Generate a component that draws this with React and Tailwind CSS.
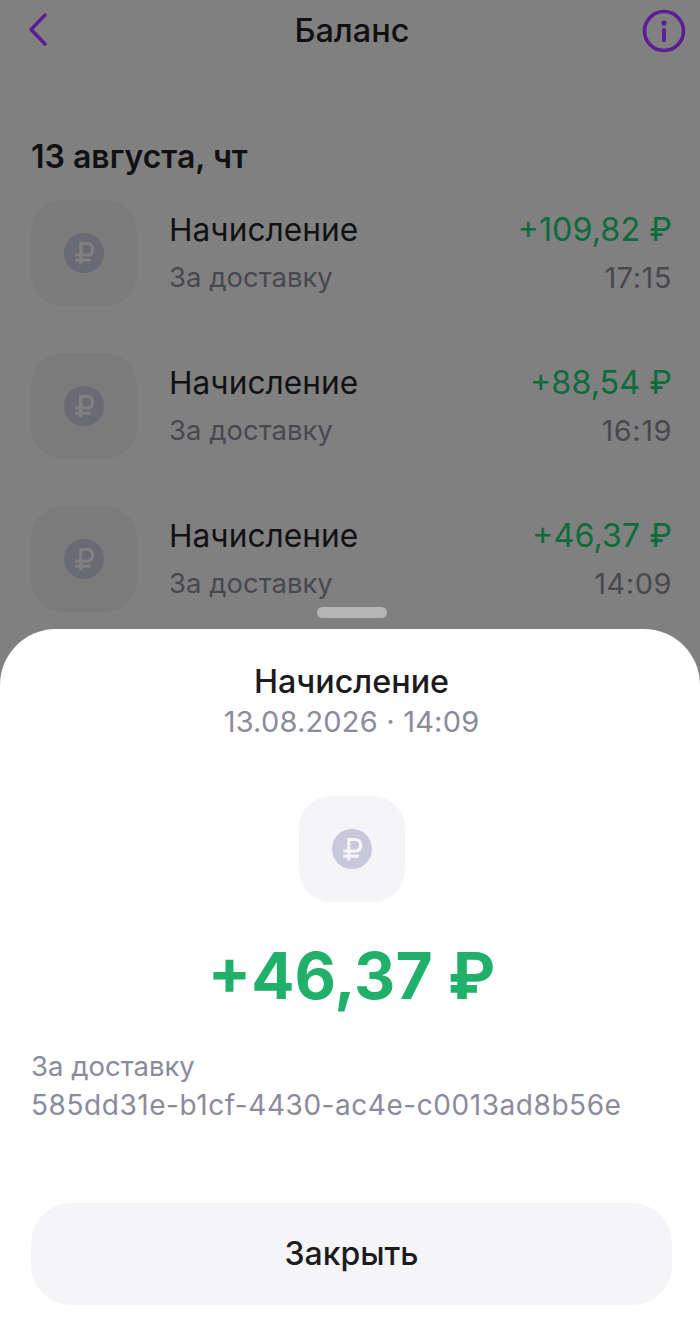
const font = { fontFamily: 'Inter, "Noto Sans", sans-serif' };

function RubleCircle({ size, bg, fg }) {
  return (
    <svg width={size} height={size} viewBox="0 0 40 40" fill="none">
      <circle cx="20" cy="20" r="20" fill={bg} />
      <path d="M16.8 31.5V10.5H23.5C26.8 10.5 28.6 13 28.6 16.3C28.6 19.8 26.8 22 23.5 22H11.2M11.2 27.2H26.8" stroke={fg} strokeWidth="3.2" />
    </svg>
  );
}

function Row({ amount, time }) {
  return (
    <div className="flex items-center h-[106px] mb-[47px]">
      <div className="w-[106px] h-[106px] rounded-[32px] bg-[#7b7b7c] flex items-center justify-center shrink-0">
        <RubleCircle size={40} bg="#696a73" fg="#808081" />
      </div>
      <div className="ml-[32px] flex-1 flex flex-col gap-[12px] pt-[2px]">
        <div className="flex justify-between items-center h-[36px]">
          <span className="text-[31.7px] text-[#121214]">Начисление</span>
          <span className="text-[32.4px] text-[#0e6b3c]">{amount}</span>
        </div>
        <div className="flex justify-between items-center h-[36px]">
          <span className="text-[27.5px] text-[#48484f]">За доставку</span>
          <span className="text-[29px] tracking-[0.5px] text-[#48484f]">{time}</span>
        </div>
      </div>
    </div>
  );
}

export default function App() {
  return (
    <div className="relative h-[1322px] w-[700px] bg-[#808080] overflow-hidden flex flex-col" style={font}>
      <div className="h-[629px] shrink-0 overflow-hidden pl-[31px] pr-[28px]">
        <div className="relative flex items-center justify-center h-[62px] pl-[1px]">
          <svg className="absolute left-[-4px] top-[12px]" width="22" height="36" viewBox="0 0 22 36" fill="none">
            <path d="M18 3L4 17.5L18 32" stroke="#5a1d96" strokeWidth="3.4" strokeLinecap="round" strokeLinejoin="round" />
          </svg>
          <span className="text-[32.5px] font-medium text-[#111113]">Баланс</span>
          <svg className="absolute right-[-14px] top-[9px]" width="44" height="44" viewBox="0 0 44 44" fill="none">
            <circle cx="22" cy="22" r="19.5" stroke="#5a1d96" strokeWidth="3.6" />
            <circle cx="22" cy="14" r="2.6" fill="#5a1d96" />
            <path d="M22 21V31" stroke="#5a1d96" strokeWidth="4" strokeLinecap="round" />
          </svg>
        </div>
        <div className="mt-[76px] h-[38px] text-[32px] font-semibold text-[#111113] leading-[38px]">13 августа, чт</div>
        <div className="mt-[24px]">
          <Row amount="+109,82 ₽" time="17:15" />
          <Row amount="+88,54 ₽" time="16:19" />
          <Row amount="+46,37 ₽" time="14:09" />
        </div>
      </div>

      {/* drag handle */}
      <div className="absolute top-[607px] left-[317px] w-[70px] h-[11px] rounded-full bg-[#b5b5b5]" />

      <div className="flex-1 bg-white rounded-t-[56px] flex flex-col items-center pl-[31px] pr-[28px]">
        <div className="mt-[33px] text-[32.3px] font-medium text-[#1c1c1f] leading-[40px]">Начисление</div>
        <div className="mt-[1px] text-[29px] tracking-[0.2px] text-[#8b8b9b] leading-[38px]">13.08.2026 · 14:09</div>
        <div className="mt-[55px] w-[106px] h-[106px] rounded-[32px] bg-[#f5f5f8] flex items-center justify-center">
          <RubleCircle size={40} bg="#c8c8da" fg="#f5f5f8" />
        </div>
        <div className="mt-[32px] text-[64px] font-bold text-[#21b069] leading-[84px]">+46,37 ₽</div>
        <div className="mt-[29px] w-full text-[28px] text-[#8b8b9b] leading-[39px]">
          <div className="text-[27.5px]">За доставку</div>
          <div className="tracking-[0.55px]">585dd31e-b1cf-4430-ac4e-c0013ad8b56e</div>
        </div>
        <button className="mt-[78px] w-full h-[102px] rounded-[40px] bg-[#f5f5f8] text-[32px] font-medium text-[#1c1c1f]" style={font}>
          Закрыть
        </button>
      </div>
    </div>
  );
}
